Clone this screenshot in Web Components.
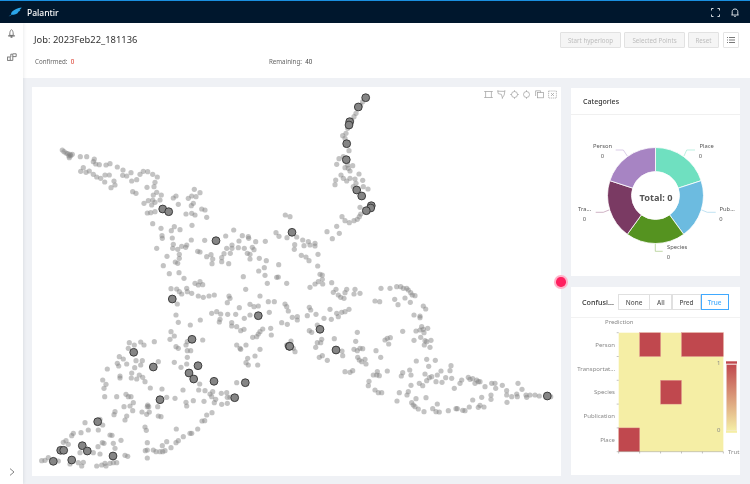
<!DOCTYPE html>
<html>
<head>
<meta charset="utf-8">
<title>Palantir</title>
<style>
  html, body { margin: 0; height: 100%; overflow: hidden; background: #eff1f5; }
  body { font-family: "Noto Sans", "Open Sans", sans-serif; color: #333; }
</style>
</head>
<body>
<app-shell>
  <top-bar slot="top"></top-bar>
  <side-nav slot="side"></side-nav>
  <job-header slot="header"></job-header>
  <scatter-panel slot="scatter"></scatter-panel>
  <categories-panel slot="right"></categories-panel>
  <confusion-panel slot="right"></confusion-panel>
</app-shell>

<script>
class AppShell extends HTMLElement {
  constructor(){
    super();
    this.attachShadow({mode: 'open'});
  }

  connectedCallback(){
    this.shadowRoot.innerHTML = `
      <style>
        :host { display: flex; flex-direction: column; width: 750px; height: 484px; background: #eff1f5; filter: blur(0.3px); }
        .row { display: flex; flex: 1; min-height: 0; }
        .main { flex: 1; display: flex; flex-direction: column; min-width: 0; }
        .content {
          position: relative;
          flex: 1;
          display: flex;
          gap: 10px;
          padding: 9px 10px 8px 9px;
        }
        .right { display: flex; flex-direction: column; gap: 11px; width: 169px; padding-top: 1px; padding-bottom: 1px; }
        .pin {
          position: absolute;
          left: 533px;
          top: 199px;
          width: 9.5px;
          height: 9.5px;
          border-radius: 50%;
          background: #ff1f5f;
          box-shadow: 0 0 0 2px #ffb3c9;
        }
      </style>
      <slot name="top"></slot>
      <div class="row">
        <slot name="side"></slot>
        <div class="main">
          <slot name="header"></slot>
          <div class="content">
            <slot name="scatter"></slot>
            <div class="right"><slot name="right"></slot></div>
            <div class="pin"></div>
          </div>
        </div>
      </div>
    `;
  }
}

class TopBar extends HTMLElement {
  constructor(){
    super();
    this.attachShadow({mode: 'open'});
  }

  connectedCallback(){
    this.shadowRoot.innerHTML = `
      <style>
        :host {
          display: flex;
          align-items: center;
          height: 22px;
          background: #00172d;
          border-top: 1px solid #1a90e0;
          color: #fff;
          font-size: 8.5px;
          padding: 0 11px 0 8px;
        }
        .logo { margin-right: 5px; }
        .name { flex: 1; font-weight: 500; }
        svg { display: block; }
        .icons { display: flex; gap: 11px; align-items: center; }
      </style>
      <svg class="logo" width="14" height="10" viewBox="0 0 14 10">
        <path d="M0.6 9.6C2 8.6 2.8 8 3.4 7.6C2.8 7.2 3 6 4.2 4.6C6 2.4 9.6 0.8 13.6 0.4C13 1.8 12.4 2.4 11.4 2.9L12.4 3C11.6 4.2 10.6 4.8 9.6 5.2L10.4 5.4C9 6.8 6.4 7.8 3.8 7.8C2.8 8.4 1.8 9 0.6 9.6Z" fill="#2ba6ea"/>
      </svg>
      <span class="name">Palantir</span>
      <div class="icons">
        <svg width="9" height="9" viewBox="0 0 9 9" fill="none" stroke="#e8edf2" stroke-width="0.9">
          <path d="M0.5 2.5V0.5H2.5M6.5 0.5H8.5V2.5M8.5 6.5V8.5H6.5M2.5 8.5H0.5V6.5"/>
        </svg>
        <svg width="8" height="9" viewBox="0 0 8 9" fill="none" stroke="#e8edf2" stroke-width="0.9">
          <path d="M1.2 7V3.6C1.2 2 2.4 1 4 1S6.8 2 6.8 3.6V7M0.4 7H7.6M3.2 8.4H4.8"/>
        </svg>
      </div>
    `;
  }
}

class SideNav extends HTMLElement {
  constructor(){
    super();
    this.attachShadow({mode: 'open'});
  }

  connectedCallback(){
    this.shadowRoot.innerHTML = `
      <style>
        :host {
          display: flex;
          flex-direction: column;
          align-items: center;
          width: 23px;
          background: #fff;
          box-shadow: 1px 0 3px rgba(0,21,41,.08);
          position: relative;
          padding-top: 6px;
          box-sizing: border-box;
          gap: 15px;
        }
        svg { display: block; }
        .grow { flex: 1; }
        .chev { margin-bottom: 8px; margin-top: -15px; }
      </style>
      <svg width="9" height="9" viewBox="0 0 9 9" fill="#707070" stroke="#707070" stroke-width="0.5">
        <path d="M4.5 0.6C3.2 1.6 2.8 3 2.8 5V6.4H6.2V5C6.2 3 5.8 1.6 4.5 0.6Z" fill="none" stroke-width="0.9"/>
        <path d="M1.4 6.6H7.6V7.2H1.4ZM3.8 7.6H5.2V8.6H3.8Z"/>
      </svg>
      <svg width="10" height="8" viewBox="0 0 10 8" fill="none" stroke="#707070" stroke-width="0.9">
        <rect x="0.6" y="4" width="2.6" height="3.4"/>
        <path d="M3.2 7.4H5.8V1.2H3.8V4"/>
        <path d="M5.8 0.8H9.2V3.6H5.8"/>
      </svg>
      <div class="grow"></div>
      <svg class="chev" width="6" height="8" viewBox="0 0 6 8" fill="none" stroke="#777" stroke-width="0.9">
        <path d="M1 0.6L5 4L1 7.4"/>
      </svg>
    `;
  }
}

class JobHeader extends HTMLElement {
  constructor(){
    super();
    this.attachShadow({mode: 'open'});
  }

  connectedCallback(){
    this.shadowRoot.innerHTML = `
      <style>
        :host {
          display: block;
          height: 55px;
          background: #fff;
          padding: 0 11px;
          box-sizing: border-box;
        }
        .top { display: flex; align-items: center; height: 32px; }
        h1 { flex: 1; margin: 0; font-size: 9.4px; font-weight: 400; color: #333; padding-top: 1px; }
        .btns { display: flex; gap: 3px; margin-top: 2px; }
        button {
          font: inherit;
          font-size: 6.2px;
          height: 16px;
          padding: 0;
          border: 1px solid #e2e2e2;
          border-radius: 1px;
          background: #f5f5f5;
          color: #bdbdbd;
          box-sizing: border-box;
        }
        .b1 { width: 61px; }
        .b2 { width: 61px; }
        .b3 { width: 31px; }
        .list { width: 16px; margin-left: 1px; background: #fff; display: flex; align-items: center; justify-content: center; border-color: #e4e4e4; }
        .stats { display: flex; font-size: 6.2px; color: #666; padding-top: 2px; padding-left: 1px; }
        .stats > span:first-child { width: 234px; }
        .red { color: #d8301f; }
        .num { color: #444; }
      </style>
      <div class="top">
        <h1>Job: 2023Feb22_181136</h1>
        <div class="btns">
          <button class="b1">Start hyperloop</button>
          <button class="b2">Selected Points</button>
          <button class="b3">Reset</button>
          <button class="list">
            <svg width="8" height="6" viewBox="0 0 8 6" fill="none" stroke="#555" stroke-width="0.8">
              <path d="M2 0.5H8M2 3H8M2 5.5H8M0 0.5H1M0 3H1M0 5.5H1"/>
            </svg>
          </button>
        </div>
      </div>
      <div class="stats">
        <span>Confirmed:&nbsp; <span class="red">0</span></span>
        <span>Remaining:&nbsp; <span class="num">40</span></span>
      </div>
    `;
  }
}

// point data was read off the reference in blocks, [offsetX, offsetY, "x,y x,y ..."] at 3x
const SMALL_POINTS = [
  [30, 85, "97,195 102,200 108,204 113,206 120,208 127,208 117,213 122,212 118,218 151,215 170,215 193,222 190,230 197,237 208,239 228,240 240,236 262,246 279,255 303,263 340,259 353,260 368,268 382,276 330,268 160,248 152,259 168,262 178,258 190,268 200,276 212,280 225,270 238,270 224,291 252,288 255,300 243,308 278,271 290,273 305,288 320,284 375,292 372,305 351,307 308,320 318,325 380,322 394,330 370,330 368,345 390,345 355,347 342,355 365,360 375,352 362,383 352,384 375,380 430,339 438,333 445,358 475,340 485,333 498,335 510,323 493,313 490,355 484,362 485,385 495,390 468,387 515,372 525,375 530,397 368,416 393,430 396,452 397,460 424,437 433,425 450,434 486,421 427,459 484,465 524,466 430,478 428,490 443,493 455,484 470,480 467,487 380,490 411,514 448,508 448,520 436,531 443,535 400,542 418,566 447,563 462,580 503,499 510,501 530,515 543,509 548,522 546,536 575,518 575,530 582,506 596,536 590,490 601,505 606,480 606,490 625,488 627,468 611,435 587,453 637,452 655,455 656,460 677,470 706,469 643,490 652,505 660,508 667,487 672,494 660,522 688,520 709,527 703,548 686,558 705,571 746,539 740,577 745,576 640,575 738,443 747,454 771,458 766,390 780,395"],
  [280, 85, "248,50 242,60 228,85 222,95 215,105 203,130 198,145 188,152 195,160 207,197 177,221 190,215 170,238 203,240 218,242 205,250 210,258 195,248 183,270 190,280 210,280 200,288 225,282 237,267 248,286 167,285 165,299 228,295 220,305 250,305 264,312 240,367 186,395 195,407 208,413 222,407 232,403 238,395 242,387 170,424 141,440 178,445 157,461 50,456 68,465 85,470 105,475 72,482 90,480 105,483 44,479 43,493 64,511 78,516 87,527 114,508 113,543 120,568 127,570 127,583"],
  [30, 280, "423,26 440,27 448,35 455,42 470,25 472,35 485,40 505,48 520,52 537,48 553,45 495,10 505,15 518,14 510,5 647,28 597,48 600,55 592,68 690,48 712,10 715,65 733,65 628,83 660,73 672,80 685,78 545,100 560,95 572,102 570,118 568,126 593,103 617,103 643,115 660,105 718,97 605,128 605,138 620,140 632,152 642,148 698,147 690,155 685,162 680,170 668,172 722,145 724,165 438,105 442,72 445,127 481,135 511,120 423,155 433,168 420,178 518,180 472,185 468,195 373,185 438,200 445,205 472,212 482,212 472,232 620,195 630,205 648,195 632,208 690,208 675,228 653,235 648,248 655,255 683,255 433,247 453,262 470,252 385,245 298,188 313,195 295,205 332,186 342,195 268,230 280,237 262,250 266,258 290,252 318,242 337,242 332,255 314,263 232,267 305,279 270,288 270,294 304,294 320,297 328,285 338,292 345,305 218,300 228,313 222,325 224,350 260,350 288,343 295,350 303,350 361,324 396,327 310,368 282,380 300,378 308,392 353,375 356,380 352,380 383,380 410,352 435,355 468,367 470,378 490,362 522,364 459,330 506,330 525,332 509,312 620,308 548,335 540,342 545,350 557,358 553,368 574,340 590,338 592,352 600,352 592,370 575,373 255,395 252,404 290,408 285,420 336,396 350,403 358,396 385,408 393,410 546,398 530,405 524,422 516,423 345,441 349,451 439,447 503,447 480,460 485,460 460,470 445,482 438,488 165,428 175,450 210,418 218,435 205,450 153,458 125,467 130,460 240,465 246,466 273,481 217,488 222,490 204,500 250,490 255,505 100,487 108,482 115,493 150,518 190,518 210,522 352,488 352,510 346,512 370,510 378,515 390,515 398,515 405,512 397,497 410,485 423,503 285,526 293,529 352,534 145,548 160,547 155,558 200,558 215,555 225,550 228,558 240,550 250,548 260,548 35,542 45,541 55,533 85,543 120,552"],
  [280, 280, "20,10 90,22 105,12 115,5 128,12 155,8 168,28 160,37 175,45 182,52 192,55 195,38 200,28 225,28 222,42 240,40 303,25 330,25 350,20 362,20 370,25 380,25 385,30 392,38 397,45 405,47 285,63 299,65 344,58 354,74 375,54 391,67 430,78 437,87 402,105 420,108 420,113 15,72 20,80 25,93 88,82 92,90 108,103 150,88 170,100 175,110 185,97 195,95 207,88 82,107 37,112 52,110 52,120 132,115 154,118 5,128 22,133 88,152 95,157 112,135 125,178 122,188 112,188 107,202 33,183 20,195 40,205 45,215 163,176 232,157 227,184 222,208 232,212 240,205 248,206 186,213 188,227 127,227 118,232 142,241 288,212 302,232 233,232 238,240 245,245 255,238 258,252 368,154 408,153 420,150 425,140 430,148 443,145 432,158 422,172 435,182 453,181 440,185 433,195 402,181 450,202 315,180 322,175 331,173 326,192 409,243 440,238 466,241 446,259 513,257 322,273 195,275 210,277 218,272 292,275 280,285 290,285 298,287 267,304 265,317 285,330 295,338 305,338 364,288 368,278 389,270 393,285 435,282 483,273 472,285 455,290 448,293 440,302 510,272 515,295 497,293 468,305 486,307 418,310 428,317 393,316 523,325 540,310 545,300 565,292 570,298 578,296 590,300 595,305 585,310 600,305 615,320 635,310 645,310 647,325 667,316 714,310 726,328 680,332 680,345 695,350 710,342 712,350 633,345 633,358 605,352 578,360 358,338 385,335 381,345 351,363 408,356 438,353 681,367 738,345 740,352 750,345 765,345 778,348 812,350 395,368 400,375 405,380 415,387 432,395 458,386 472,372 468,395 478,396 505,392 528,386 532,386 548,391 555,392 568,381 595,382 600,376 612,381"]
];

const LARGE_POINTS = [
  [30, 85, "398,372 416,380 558,467"],
  [280, 85, "257,38 235,66 209,110 207,120 200,176 199,224 230,315 245,333 274,362 272,369 259,377 36,442"],
  [30, 280, "427,57 685,107 486,178 778,199 311,217 370,261 504,257 477,279 491,297 552,304 646,308 614,353 390,359 203,425 157,497 92,511 101,511 172,513 125,540 70,544 249,528"],
  [280, 280, "120,148 29,199 168,210 802,348"]
];

function toCircles(blocks, attrs){
  let out = '';
  for (const [ox, oy, list] of blocks) {
    for (const pair of list.split(' ')) {
      const [x, y] = pair.split(',').map(Number);
      out += `<circle cx="${(ox + x / 3).toFixed(1)}" cy="${(oy + y / 3).toFixed(1)}" ${attrs}/>`;
    }
  }
  return out;
}

class ScatterPanel extends HTMLElement {
  constructor(){
    super();
    this.attachShadow({mode: 'open'});
  }

  connectedCallback(){
    this.shadowRoot.innerHTML = `
      <style>
        :host { display: block; position: relative; width: 529px; height: 389px; background: #fff; }
        svg.plot { display: block; }
        .tools { position: absolute; top: 3px; right: 4px; display: flex; gap: 3.8px; }
        .tools svg { display: block; }
      </style>
      <svg class="plot" width="529" height="389" viewBox="32 87 529 389">
        <g fill="#828282" fill-opacity="0.48">${toCircles(SMALL_POINTS, 'r="2.6"')}</g>
        <g fill="#858585" stroke="#333" stroke-width="0.9">${toCircles(LARGE_POINTS, 'r="3.9"')}</g>
      </svg>
      <div class="tools">
        <svg width="9" height="9" viewBox="0 0 9 9" fill="none" stroke="#9c9c9c" stroke-width="0.7">
          <path d="M0.2 1.5H8.8M0.2 7.5H8.8M1.6 1.5V7.5M7.4 1.5V7.5"/>
        </svg>
        <svg width="9" height="9" viewBox="0 0 9 9" fill="none" stroke="#9c9c9c" stroke-width="0.7">
          <path d="M0.8 1.2L7.8 1.4L7.2 5L5.4 7.8L4.4 4.4L1.2 3.6Z"/>
          <path d="M0.2 0.8H1.4M7.2 0.8H8.4M4.8 8.2H6"/>
        </svg>
        <svg width="9" height="9" viewBox="0 0 9 9" fill="none" stroke="#9c9c9c" stroke-width="0.7">
          <path d="M4.5 0.2V1.6M4.5 7.4V8.8M0.2 4.5H1.6M7.4 4.5H8.8"/>
          <circle cx="4.5" cy="4.5" r="3"/>
        </svg>
        <svg width="9" height="9" viewBox="0 0 9 9" fill="none" stroke="#9c9c9c" stroke-width="0.7">
          <path d="M4.5 0.2V1.8M4.5 7.2V8.8"/>
          <circle cx="4.5" cy="4.5" r="3"/>
        </svg>
        <svg width="9" height="9" viewBox="0 0 9 9" fill="none" stroke="#9c9c9c" stroke-width="0.7">
          <path d="M0.6 6V0.8H5.6V2.6"/>
          <rect x="2.6" y="2.6" width="5.8" height="5.2"/>
        </svg>
        <svg width="9" height="9" viewBox="0 0 9 9" fill="none" stroke="#9c9c9c" stroke-width="0.7">
          <rect x="0.6" y="1" width="7.8" height="7" stroke-dasharray="1.2 0.7"/>
          <path d="M3 3L6 6M6 3L3 6"/>
        </svg>
      </div>
    `;
  }
}

// wedge of a ring, angles in degrees clockwise from twelve o'clock
function ringSlice(cx, cy, r0, r1, a0, a1){
  const pt = (r, a) => {
    const t = (a - 90) * Math.PI / 180;
    return `${(cx + r * Math.cos(t)).toFixed(2)} ${(cy + r * Math.sin(t)).toFixed(2)}`;
  };
  return `M${pt(r1, a0)}A${r1} ${r1} 0 0 1 ${pt(r1, a1)}L${pt(r0, a1)}A${r0} ${r0} 0 0 0 ${pt(r0, a0)}Z`;
}

class CategoriesPanel extends HTMLElement {
  constructor(){
    super();
    this.attachShadow({mode: 'open'});
  }

  connectedCallback(){
    const colors = ['#6fe0c0', '#6cbbe0', '#559320', '#7a3a63', '#a784c3'];
    const slices = colors.map((c, i) =>
      `<path d="${ringSlice(655.5, 195.5, 24, 48, i * 72, (i + 1) * 72)}" fill="${c}" stroke="#fff" stroke-width="0.8"/>`
    ).join('');
    this.shadowRoot.innerHTML = `
      <style>
        :host { display: block; height: 188px; background: #fff; }
        .head {
          height: 27px;
          box-sizing: border-box;
          border-bottom: 1px solid #f0f0f0;
          padding: 0 12px;
          display: flex;
          align-items: center;
          font-size: 7px;
          font-weight: 500;
          color: #333;
        }
        svg { display: block; }
        text { font-size: 5.8px; fill: #555; font-family: "Noto Sans", sans-serif; }
        .total { font-size: 9.2px; font-weight: 700; fill: #555; }
      </style>
      <div class="head">Categories</div>
      <svg width="169" height="161" viewBox="571 115 169 161">
        ${slices}
        <g fill="none" stroke-width="0.7">
          <path d="M695 150H686.7L684 156" stroke="#a4e9d6"/>
          <path d="M701.7 210L707.3 212.3H715.7" stroke="#a6d6ec"/>
          <path d="M655.3 244V251.3H662.7" stroke="#a5c783"/>
          <path d="M595.7 212.3H603.3L609 210" stroke="#bb94ae"/>
          <path d="M615.7 150H623.3L627.3 156" stroke="#cbb7dc"/>
        </g>
        <text x="656" y="201" text-anchor="middle" class="total">Total: 0</text>
        <text x="593" y="148">Person</text><text x="602.5" y="158" text-anchor="middle">0</text>
        <text x="699.5" y="148">Place</text><text x="700.5" y="158" text-anchor="middle">0</text>
        <text x="719.5" y="210.5">Pub...</text><text x="721" y="220.5" text-anchor="middle">0</text>
        <text x="667" y="248.5">Species</text><text x="668.5" y="258.5" text-anchor="middle">0</text>
        <text x="578" y="210.5">Tra...</text><text x="584.5" y="220.5" text-anchor="middle">0</text>
      </svg>
    `;
  }
}

class SegButtons extends HTMLElement {
  constructor(){
    super();
    this.attachShadow({mode: 'open'});
  }

  connectedCallback(){
    const active = this.getAttribute('active');
    const items = this.getAttribute('items').split(',');
    const widths = this.getAttribute('widths').split(',');
    this.shadowRoot.innerHTML = `
      <style>
        :host { display: flex; }
        span {
          display: flex;
          align-items: center;
          justify-content: center;
          height: 16px;
          box-sizing: border-box;
          border: 0.7px solid #e0e0e0;
          margin-left: -0.7px;
          font-size: 6.4px;
          color: #555;
          background: #fff;
        }
        span.on { color: #40a9ff; border-color: #40a9ff; position: relative; }
      </style>
      ${items.map((t, i) => `<span class="${t === active ? 'on' : ''}" style="width:${widths[i]}px">${t}</span>`).join('')}
    `;
  }
}

class ConfusionPanel extends HTMLElement {
  constructor(){
    super();
    this.attachShadow({mode: 'open'});
  }

  connectedCallback(){
    const x0 = 618.7, y0 = 332.7, cw = 20.93, ch = 23.8;
    // [column, row, span]
    const red = [[1, 0, 1], [3, 0, 2], [2, 2, 1], [0, 4, 1]];
    const cells = red.map(([c, r, n]) =>
      `<rect x="${x0 + c * cw}" y="${y0 + r * ch}" width="${cw * n}" height="${ch}" fill="#c0484e" stroke="#e0989a" stroke-width="0.4"/>`
    ).join('');
    const names = ['Person', 'Transportat...', 'Species', 'Publication', 'Place'];
    const labels = names.map((n, i) =>
      `<text x="615" y="${(y0 + (i + 0.5) * ch + 2.2).toFixed(1)}" text-anchor="end">${n}</text>`
    ).join('');
    let ticks = '';
    for (let i = 0; i <= 5; i++) {
      const y = y0 + i * ch;
      ticks += `M616.7 ${y}H${x0}`;
      const x = x0 + i * cw;
      ticks += `M${x} ${y0 + 5 * ch}v1.8`;
    }
    this.shadowRoot.innerHTML = `
      <style>
        :host { display: block; height: 188px; background: #fff; overflow: hidden; }
        .head {
          height: 31px;
          box-sizing: border-box;
          border-bottom: 1px solid #f2f2f2;
          padding: 0 11.5px 0 11px;
          display: flex;
          align-items: center;
          justify-content: space-between;
          font-size: 7.2px;
          font-weight: 500;
          color: #333;
        }
        svg { display: block; }
        text { font-size: 6px; fill: #888; font-family: "Noto Sans", sans-serif; }
      </style>
      <div class="head">
        <span>Confusi...</span>
        <seg-buttons items="None,All,Pred,True" widths="32,23,29.5,28" active="True"></seg-buttons>
      </div>
      <svg width="169" height="157" viewBox="571 318 169 157">
        <text x="605" y="324.4">Prediction</text>
        <rect x="${x0}" y="${y0}" width="${5 * cw}" height="${5 * ch}" fill="#f5eea5"/>
        ${cells}
        ${labels}
        <path d="${ticks}" fill="none" stroke="#888" stroke-width="0.5"/>
        <path d="M${x0} ${y0 + 5 * ch}H${x0 + 5 * cw}" stroke="#999" stroke-width="0.5"/>
        <defs>
          <linearGradient id="scale" x1="0" y1="0" x2="0" y2="1">
            <stop offset="0" stop-color="#c0484e"/>
            <stop offset="1" stop-color="#f5eea5"/>
          </linearGradient>
        </defs>
        <rect x="726.3" y="364.5" width="10.4" height="66" fill="url(#scale)" stroke="#eee0d8" stroke-width="0.5"/>
        <rect x="726" y="361.3" width="11" height="2.4" fill="#c0484e"/>
        <rect x="726" y="430.6" width="11" height="2.2" fill="#f5eea5"/>
        <text x="717" y="364.8">1</text>
        <text x="717" y="432.2">0</text>
        <text x="728" y="453.5">Trut</text>
      </svg>
    `;
  }
}

customElements.define('app-shell', AppShell);
customElements.define('top-bar', TopBar);
customElements.define('side-nav', SideNav);
customElements.define('job-header', JobHeader);
customElements.define('scatter-panel', ScatterPanel);
customElements.define('categories-panel', CategoriesPanel);
customElements.define('seg-buttons', SegButtons);
customElements.define('confusion-panel', ConfusionPanel);
</script>
</body>
</html>
